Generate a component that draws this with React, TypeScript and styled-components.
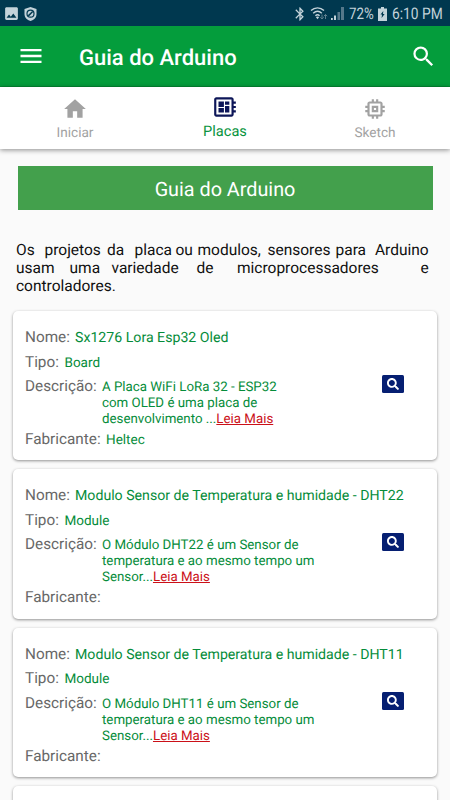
import React from 'react';
import styled, { createGlobalStyle } from 'styled-components';
import { MdHome, MdDeveloperBoard, MdMemory, MdSearch, MdMenu, MdBluetooth, MdImage } from 'react-icons/md';
import { FaSearch } from 'react-icons/fa';

const Global = createGlobalStyle`
  * { box-sizing: border-box; }
  html, body { margin: 0; padding: 0; height: 800px; overflow: hidden; }
  body { background: #fafafa; font-family: Roboto, "Liberation Sans", sans-serif; text-rendering: geometricPrecision; }
`;

const Screen = styled.div`
  width: 450px;
  height: 800px;
  overflow: hidden;
  display: flex;
  flex-direction: column;
  background: #fafafa;
`;

const StatusBar = styled.div`
  height: 26px;
  flex: none;
  background: #00384f;
  color: #c3d3da;
  display: flex;
  align-items: center;
  padding: 1px 6px 0 3px;
  svg { display: block; flex: none; }
`;

const StatusGroup = styled.div<{ $end?: boolean; $gap: number }>`
  display: flex;
  align-items: center;
  gap: ${p => p.$gap}px;
  margin-left: ${p => (p.$end ? 'auto' : '0')};
`;

const StatusText = styled.span<{ $width: number; $squeeze: number; $left: number }>`
  width: ${p => p.$width}px;
  margin-left: ${p => p.$left}px;
  font-size: 16px;
  line-height: 20px;
  white-space: nowrap;
  transform: scaleX(${p => p.$squeeze});
  transform-origin: left center;
`;

const AppBar = styled.header`
  height: 61px;
  flex: none;
  display: flex;
  align-items: center;
  padding: 0 13px 0 17px;
  background: #049d3c;
  border-bottom: 1px solid #038a33;
  color: #fff;
  svg { display: block; }
`;

const Title = styled.h1`
  margin: 6px auto 0 34px;
  font-size: 22px;
  font-weight: 500;
  line-height: 28px;
`;

const Tabs = styled.nav`
  height: 62px;
  flex: none;
  display: grid;
  grid-template-columns: repeat(3, 1fr);
  background: #fff;
  box-shadow: 0 1px 5px rgba(0, 0, 0, 0.45);
`;

const Tab = styled.div<{ $active?: boolean }>`
  display: flex;
  flex-direction: column;
  align-items: center;
  padding-top: ${p => (p.$active ? 7 : 9)}px;
  color: ${p => (p.$active ? '#0a9440' : '#a2a2a2')};
  font-size: ${p => (p.$active ? 14.6 : 13.6)}px;
  line-height: 18px;
  svg { display: block; color: ${p => (p.$active ? '#0d1658' : '#a2a2a2')}; margin-bottom: 2px; }
`;

const Banner = styled.div`
  height: 44px;
  flex: none;
  margin: 17px 17.5px 0;
  background: #43a04c;
  color: #fff;
  font-size: 19.8px;
  line-height: 47px;
  text-align: center;
`;

const Intro = styled.div`
  margin: 31px 0 0 16px;
  height: 70px;
  flex: none;
  font-size: 15.5px;
  line-height: 18px;
  color: #101010;
`;

const Line = styled.div`
  display: flex;
  white-space: nowrap;
`;

const Word = styled.span<{ $w: number }>`
  width: ${p => p.$w}px;
  flex: none;
`;

const Cards = styled.main`
  display: flex;
  flex-direction: column;
  gap: 9px;
  padding: 0 13px;
`;

const Card = styled.article`
  height: 149.4px;
  flex: none;
  padding: 14px 12px 0;
  background: #fff;
  border-radius: 5px;
  box-shadow: 0 1px 3px rgba(0, 0, 0, 0.42);
`;

const Field = styled.div<{ $h: number }>`
  display: flex;
  align-items: baseline;
  height: ${p => p.$h}px;
  white-space: nowrap;
  line-height: 24px;
`;

const Label = styled.span<{ $w: number }>`
  width: ${p => p.$w}px;
  flex: none;
  font-size: 15.3px;
  color: #686868;
`;

const Value = styled.span<{ $size?: number }>`
  font-size: ${p => p.$size ?? 13.5}px;
  color: #058c3a;
`;

const Description = styled.div`
  width: 280px;
  font-size: 13.3px;
  line-height: 16px;
  color: #058c3a;
`;

const DescriptionLine = styled.div`
  display: flex;
  white-space: pre;
`;

const More = styled.a`
  color: #cb1018;
  text-decoration: underline;
`;

const LookUp = styled.button`
  width: 22px;
  height: 18px;
  margin: 1px 0 0;
  padding: 0;
  border: 0;
  border-radius: 1.5px;
  background: #061f72;
  color: #fff;
  display: grid;
  place-items: center;
  align-self: flex-start;
  flex: none;
`;

const WifiIcon = () => (
  <svg width="18" height="15" viewBox="0 0 18 15" fill="none">
    <path d="M1 4.6C4.8.9 10.2.9 14 4.6M3.2 7.3c2.7-2.5 6-2.5 8.6 0M5.4 9.8c1.4-1.3 2.8-1.3 4.2 0" stroke="#c3d3da" strokeWidth="1.4" />
    <path d="M7.5 13.2 5.8 11c1-.8 2.4-.8 3.4 0z" fill="#c3d3da" />
    <path d="M12 8.5V13m-1.7-1.7L12 13l1.7-1.7M15.5 13V8.5m-1.7 1.7 1.7-1.7 1.7 1.7" stroke="#5e808f" strokeWidth="1" />
  </svg>
);

const SignalIcon = () => (
  <svg width="13" height="13" viewBox="0 0 13 13">
    <path d="M0 11h1.8v2H0zM3 8.5h2V13H3z" fill="#c3d3da" />
    <path d="M6.5 5H9v8H6.5zM10 0h3v13h-3z" fill="#55788a" />
  </svg>
);

const BatteryIcon = () => (
  <svg width="9" height="14" viewBox="0 0 9 14">
    <path d="M3 0h3v1.5h3V14H0V1.5h3z" fill="#c3d3da" />
    <path d="M5.3 4 2.5 7.5H4L3.6 11l3-4H5z" fill="#00384f" />
  </svg>
);

const ShieldIcon = () => (
  <svg width="13" height="14" viewBox="0 0 13 14" fill="none">
    <path d="M6.5 0l6 2v5c0 3.500-2.500 6-6 7-3.500-1-6-3.500-6-7V2z" fill="#c3d3da" />
    <circle cx="6.5" cy="6.7" r="3.5" stroke="#00384f" strokeWidth="1.2" />
    <path d="m4.3 8.9 4.4-4.4" stroke="#00384f" strokeWidth="1.5" />
  </svg>
);

const intro: [string, number][][] = [
  [['Os', 28.5], ['projetos', 62.5], ['da', 27.5], ['placa', 41], ['ou', 22], ['modulos,', 70], ['sensores', 68], ['para', 39.5], ['Arduino', 54]],
  [['usam', 53.5], ['uma', 42], ['variedade', 85], ['de', 40.5], ['microprocessadores', 183.5], ['e', 8]],
  [['controladores.', 100]],
];

interface Board {
  name: string;
  type: string;
  lines: string[];
  maker: string;
}

const boards: Board[] = [
  { name: 'Sx1276 Lora Esp32 Oled', type: 'Board', lines: ['A Placa WiFi LoRa 32 - ESP32', 'com OLED é uma placa de', 'desenvolvimento ...'], maker: 'Heltec' },
  { name: 'Modulo Sensor de Temperatura e humidade - DHT22', type: 'Module', lines: ['O Módulo DHT22 é um Sensor de', 'temperatura e ao mesmo tempo um', 'Sensor...'], maker: '' },
  { name: 'Modulo Sensor de Temperatura e humidade - DHT11', type: 'Module', lines: ['O Módulo DHT11 é um Sensor de', 'temperatura e ao mesmo tempo um', 'Sensor...'], maker: '' },
];

const BoardCard = ({ name, type, lines, maker }: Board) => (
  <Card>
    <Field $h={24.5}><Label $w={50}>Nome:</Label><Value $size={14.15}>{name}</Value></Field>
    <Field $h={24.5}><Label $w={39.5}>Tipo:</Label><Value>{type}</Value></Field>
    <Field $h={53}>
      <Label $w={77}>Descrição:</Label>
      <Description>
        {lines.map((line, i) => (
          <DescriptionLine key={line}>
            <span>{line}</span>
            {i === lines.length - 1 && <More>Leia Mais</More>}
          </DescriptionLine>
        ))}
      </Description>
      <LookUp aria-label="Pesquisar"><FaSearch size={12} /></LookUp>
    </Field>
    <Field $h={24}><Label $w={81}>Fabricante:</Label><Value>{maker}</Value></Field>
  </Card>
);

export default function App() {
  return (
    <Screen>
      <Global />
      <StatusBar>
        <StatusGroup $gap={4}><MdImage size={17} /><ShieldIcon /></StatusGroup>
        <StatusGroup $end $gap={2.5}>
          <MdBluetooth size={16} />
          <WifiIcon />
          <SignalIcon />
          <StatusText $width={27} $squeeze={0.83} $left={2.5}>72%</StatusText>
          <BatteryIcon />
          <StatusText $width={52} $squeeze={0.86} $left={2.5}>6:10 PM</StatusText>
        </StatusGroup>
      </StatusBar>
      <AppBar>
        <MdMenu size={28} />
        <Title>Guia do Arduino</Title>
        <MdSearch size={27} />
      </AppBar>
      <Tabs>
        <Tab><MdHome size={26} />Iniciar</Tab>
        <Tab $active><MdDeveloperBoard size={26} />Placas</Tab>
        <Tab><MdMemory size={26} />Sketch</Tab>
      </Tabs>
      <Banner>Guia do Arduino</Banner>
      <Intro>
        {intro.map((line, i) => (
          <Line key={i}>{line.map(([word, w]) => <Word key={word} $w={w}>{word}</Word>)}</Line>
        ))}
      </Intro>
      <Cards>
        {boards.map(b => <BoardCard key={b.name} {...b} />)}
        <Card />
      </Cards>
    </Screen>
  );
}
